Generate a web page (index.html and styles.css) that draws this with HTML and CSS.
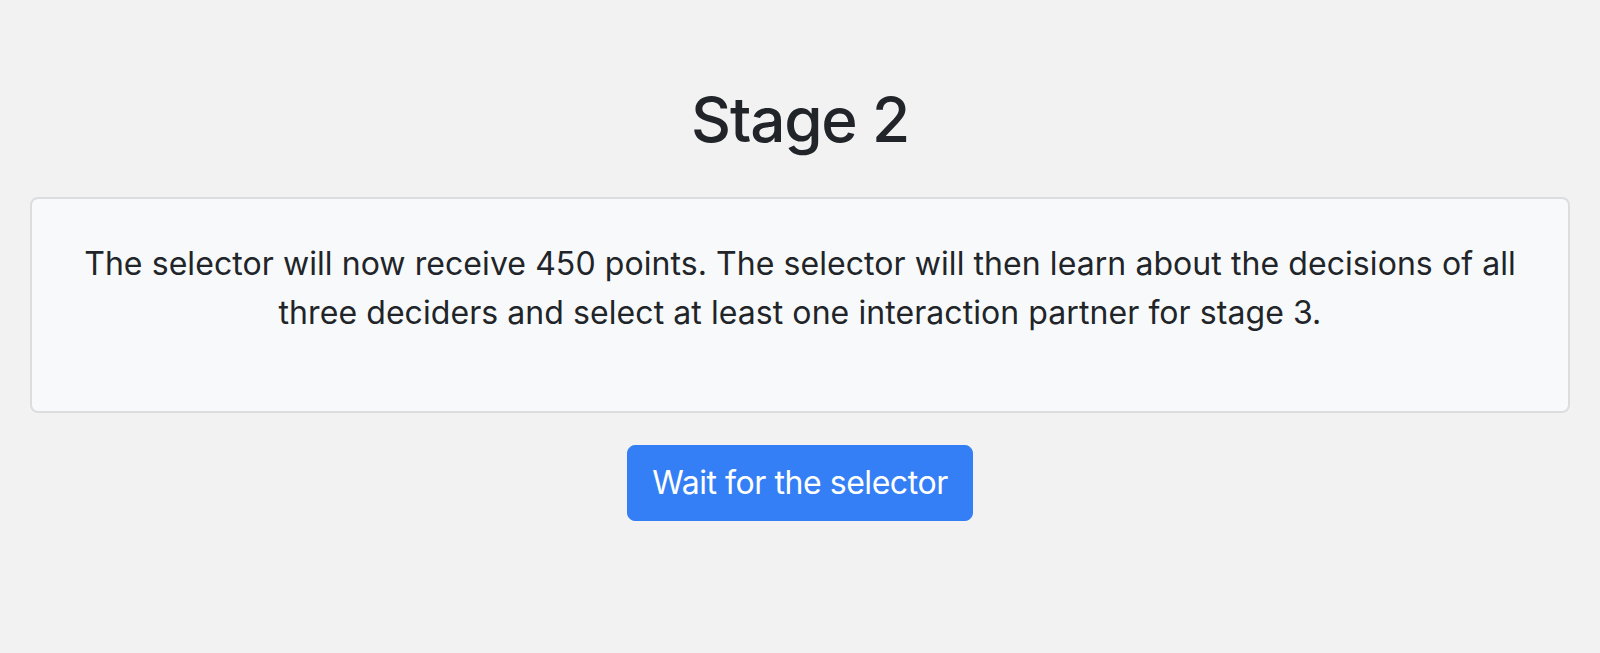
FILE: index.html
```html
<!DOCTYPE html>
<html lang="en">
<head>
<meta charset="utf-8">
<title>Stage 2</title>
<link rel="stylesheet" href="styles.css">
</head>
<body>
<main class="page">
  <h2 class="title">Stage 2</h2>
  <section class="card">
    <p class="card-text">The selector will now receive 450 points. The selector will then learn about the decisions of all three deciders and select at least one interaction partner for stage 3.</p>
  </section>
  <div class="actions">
    <button class="btn" type="button">Wait for the selector</button>
  </div>
</main>
</body>
</html>
```
FILE: styles.css
```css
html, body {
  margin: 0;
  padding: 0;
}
body {
  background: #f2f2f2;
  color: #212529;
  font-family: Inter, "Noto Sans", "Liberation Sans", sans-serif;
  width: 1600px;
  height: 653px;
  overflow: hidden;
}
.page {
  padding: 82px 30px 0;
  display: flex;
  flex-direction: column;
  align-items: stretch;
}
.title {
  margin: 0 0 39px;
  font-size: 62px;
  font-weight: 500;
  line-height: 76px;
  letter-spacing: -1.2px;
  text-align: center;
}
.card {
  background: #f8f9fa;
  border: 2px solid #dcdddf;
  border-radius: 8px;
  padding: 40px 40px 74px;
}
.card-text {
  margin: 0;
  font-size: 32px;
  line-height: 49px;
  letter-spacing: 0.07px;
  text-align: center;
}
.actions {
  display: flex;
  justify-content: center;
  margin-top: 32px;
}
.btn {
  font-family: inherit;
  font-size: 32px;
  line-height: 48px;
  letter-spacing: -0.45px;
  color: #fff;
  background: #357ff6;
  border: 1px solid #357ff6;
  border-radius: 8px;
  padding: 13px 24px;
}
```
